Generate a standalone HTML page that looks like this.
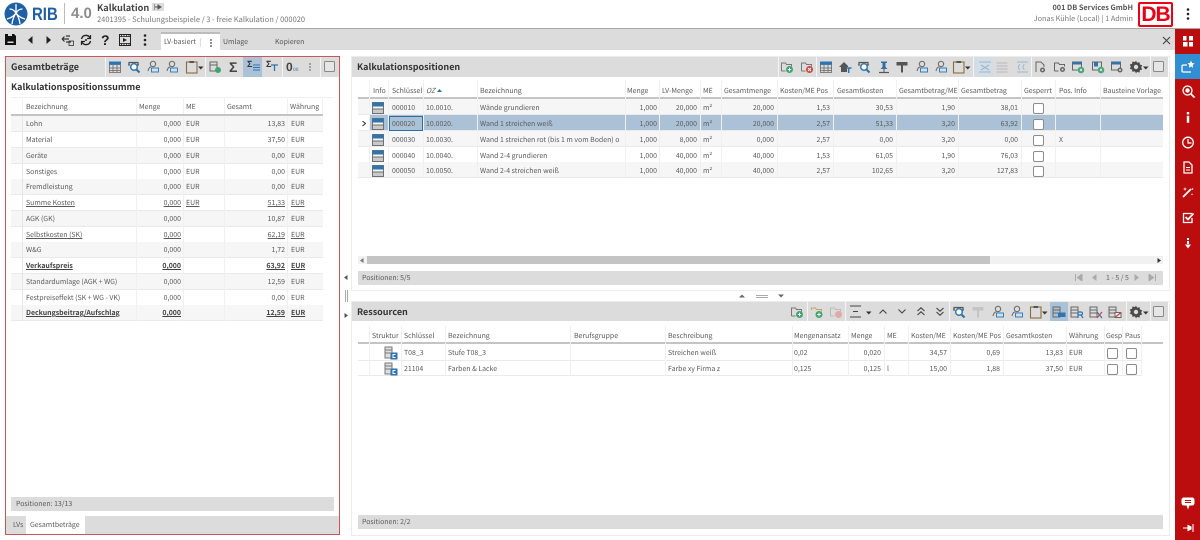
<!DOCTYPE html>
<html lang="de"><head><meta charset="utf-8"><title>Kalkulation</title>
<style>
html,body{margin:0;padding:0;background:#fff}
#p{position:relative;width:1200px;height:540px;overflow:hidden;background:#fff;font-family:"Noto Sans CJK JP","Liberation Sans",sans-serif;font-size:6.95px;line-height:15px;color:#5a5a5a;text-rendering:geometricPrecision;filter:blur(.3px)}
#p div,#p span,#p svg{position:absolute;white-space:nowrap}
.g{background:#dcdcdc}
.t{font-weight:700;font-size:9px;line-height:12px;color:#333}
.sep{width:1px;background:#f4f4f4}
.r{height:15px;border-bottom:1px solid #eaeaea}
.alt{background:#f6f6f6}
.sel{background:#abc2d6}
.b{font-weight:700;color:#444}
.u{text-decoration:underline}
.rt{text-align:right}
.v{width:1px;background:#f0f0f0;top:0;bottom:0}
.hl{height:2px;background:#c4c4c4}
.ck{width:9px;height:9px;border:1px solid #8c8c8c;border-radius:2px;background:#fff}
.i{width:14px;height:14px;overflow:visible}
</style></head><body><div id="p">
<svg style="width:0;height:0">
<defs>
<symbol id="g" viewBox="0 0 14 14"><rect x="1" y="1.5" width="12" height="3.4" fill="#2f74ae"/><path d="M1.5 5v7.5h11V5M1.5 8h11M1.5 10.5h11M5 5v7.5M9 5v7.5" fill="none" stroke="#666" stroke-width=".8"/></symbol>
<symbol id="s" viewBox="0 0 14 14"><path d="M2 5V2.500h9V5" fill="none" stroke="#555" stroke-width="1.2"/><circle cx="7" cy="7" r="3.300" fill="#fff" stroke="#3d7fb3" stroke-width="1.6"/><path d="M9.500 9.500l3 3" stroke="#2f6fa8" stroke-width="2"/><path d="M1 5h2M10 5h2" stroke="#555"/></symbol>
<symbol id="u" viewBox="0 0 14 14"><circle cx="7" cy="4" r="2.700" fill="none" stroke="#666"/><path d="M2 11c.4-2.600 1.800-4 3-4" fill="none" stroke="#666"/><rect x="5.500" y="8" width="7" height="4" fill="#cfe0ef" stroke="#3d7fb3"/></symbol>
<symbol id="c" viewBox="0 0 14 14"><rect x="1.500" y="2" width="10.500" height="11" fill="none" stroke="#8a6d3b" stroke-width="1.100"/><rect x="4.500" y="1" width="4.500" height="2" fill="#555"/></symbol>
<symbol id="d" viewBox="0 0 6 4"><path d="M0 .5h5.500L2.750 3.500z" fill="#333"/></symbol>
<symbol id="fg" viewBox="0 0 14 14"><path d="M1.500 11V3h4l1 1.500h5v2" fill="none" stroke="#777"/><path d="M1.500 11h4" stroke="#777"/><circle cx="9.500" cy="9.500" r="3.500" fill="#3fa56c"/><path d="M7.800 9.500h3.400M9.500 7.800v3.400" stroke="#fff"/></symbol>
<symbol id="fr" viewBox="0 0 14 14"><path d="M1.500 11V3h4l1 1.500h5v2" fill="none" stroke="#777"/><path d="M1.500 11h4" stroke="#777"/><circle cx="9.500" cy="9.500" r="3.500" fill="#d0443e"/><path d="M8 8l3 3M11 8l-3 3" stroke="#fff"/></symbol>
<symbol id="fy" viewBox="0 0 14 14"><path d="M1.500 5V3h4l1 1.500h5v2" fill="none" stroke="#c9a35a"/><circle cx="9" cy="9.500" r="3.500" fill="#3fa56c"/><path d="M7.300 9.500h3.400M9 7.800v3.400" stroke="#fff"/></symbol>
<symbol id="fp" viewBox="0 0 14 14"><path d="M1.500 11V3h4l1 1.500h5v2M1.500 11h4" fill="none" stroke="#bbb"/><circle cx="9.500" cy="9.500" r="3.500" fill="#e3a9a5"/></symbol>
<symbol id="h" viewBox="0 0 14 14"><path d="M1 7l5-5 4 4v1H9v5H3V7z" fill="#555"/><path d="M8 8h5.500M10.700 8v5" stroke="#2f74ae" stroke-width="1.500"/></symbol>
<symbol id="pn" viewBox="0 0 14 14"><path d="M4 1.500h6v1.500H8.500v4l2 2h-7l2-2V3H4z" fill="#2f6fa8"/><path d="M2 12.500h10" stroke="#555" stroke-width="1.200"/><path d="M7 9v3" stroke="#555"/></symbol>
<symbol id="ro" viewBox="0 0 14 14"><path d="M1.500 2h11v3.500h-11z" fill="#555"/><path d="M7 5.500v7" stroke="#555" stroke-width="2"/></symbol>
<symbol id="rp" viewBox="0 0 14 14"><path d="M1.500 2h11v3.500h-11z" fill="#c4c4c4"/><path d="M7 5.500v7" stroke="#c4c4c4" stroke-width="2"/></symbol>
<symbol id="m1" viewBox="0 0 14 14"><path d="M1 2h12M1 12h12M3 5l4 2.500L3 10M11 5L7 7.500 11 10" fill="none" stroke="#9db7cd" stroke-width="1.100"/></symbol>
<symbol id="m2" viewBox="0 0 14 14"><path d="M1.500 3h11M1.500 6h11M1.500 9h11M1.500 12h11" stroke="#b7b7b7" stroke-width="1.100"/></symbol>
<symbol id="m3" viewBox="0 0 14 14"><path d="M2 2h11M2 12h11M5 4.500C3 5 3 9 5 9.500M9.500 4.500C7.500 5 7.500 9 9.500 9.500" fill="none" stroke="#9db7cd" stroke-width="1"/></symbol>
<symbol id="dg" viewBox="0 0 14 14"><path d="M3 12V2h5l3 3v2" fill="none" stroke="#666"/><circle cx="9.500" cy="10" r="2.500" fill="#666"/><circle cx="9.500" cy="10" r="1" fill="#dcdcdc"/></symbol>
<symbol id="fgg" viewBox="0 0 14 14"><path d="M1.500 11V3h4l1 1.500h5v2M1.500 11h4" fill="none" stroke="#666"/><circle cx="9.500" cy="9.500" r="2.500" fill="#666"/><circle cx="9.500" cy="9.500" r="1" fill="#dcdcdc"/></symbol>
<symbol id="bg" viewBox="0 0 14 14"><rect x="1.500" y="2" width="9" height="8" fill="none" stroke="#666"/><rect x="1.500" y="2" width="9" height="2.500" fill="#2f74ae"/><circle cx="10" cy="10" r="3.300" fill="#4aa77a"/><circle cx="10" cy="10" r="1.200" fill="#dcdcdc"/></symbol>
<symbol id="bb" viewBox="0 0 14 14"><rect x="1.500" y="2" width="9" height="8" fill="none" stroke="#666"/><rect x="3" y="2" width="4" height="4.500" fill="#2f74ae"/><circle cx="10" cy="10" r="3.300" fill="#4aa77a"/><circle cx="10" cy="10" r="1.200" fill="#dcdcdc"/></symbol>
<symbol id="bc" viewBox="0 0 14 14"><rect x="1.500" y="2" width="9" height="8" fill="none" stroke="#666"/><rect x="1.500" y="2" width="9" height="2.500" fill="#2f74ae"/><circle cx="10" cy="10" r="2.500" fill="#666"/><circle cx="10" cy="10" r="1" fill="#dcdcdc"/></symbol>
<symbol id="gr" viewBox="0 0 14 14"><path d="M7 .8l1.200 2 2.300-.7.400 2.400 2.300.7-1 2.200 1 2.100-2.300.8-.4 2.300-2.300-.7L7 13.200l-1.200-2-2.300.7-.4-2.300-2.300-.8 1-2.100-1-2.200 2.300-.7.400-2.400 2.300.7z" fill="#4a4a4a"/><circle cx="7" cy="7" r="2.200" fill="#dcdcdc"/></symbol>
<symbol id="sq" viewBox="0 0 14 14"><rect x="1.500" y="1.500" width="10" height="10" rx="1" fill="#e6e6e6" stroke="#8a8a8a"/></symbol>
<symbol id="ex" viewBox="0 0 14 14"><rect x="2" y="2" width="7" height="9" fill="none" stroke="#666"/><path d="M2 5h7" stroke="#666"/><circle cx="10" cy="10" r="3" fill="#3fa56c"/></symbol>
<symbol id="lv" viewBox="0 0 14 14"><rect x="1.500" y="1.500" width="11" height="11" fill="#f4f4f4" stroke="#707070"/><rect x="1.500" y="1.500" width="11" height="4" fill="#2f74ae"/><path d="M2 8h10" stroke="#707070"/><rect x="2" y="8.500" width="10" height="3.500" fill="#c9c9c9"/></symbol>
<symbol id="st" viewBox="0 0 14 14"><rect x="1" y="1" width="7" height="11" fill="#dfdfdf" stroke="#777"/><path d="M1 4h7M1 7h7" stroke="#777"/><rect x="6.500" y="6.500" width="7" height="7" fill="#2f74ae"/><path d="M11.500 8.500H9v3h2.500" fill="none" stroke="#fff"/></symbol>
<symbol id="lst" viewBox="0 0 14 14"><rect x="1" y="2" width="7" height="10" fill="none" stroke="#666"/><path d="M1 5h7M1 8h7" stroke="#666"/><rect x="6" y="7.500" width="7.500" height="4.500" fill="#2f74ae"/></symbol>
<symbol id="lsr" viewBox="0 0 14 14"><rect x="1" y="2" width="7" height="10" fill="none" stroke="#666"/><path d="M1 5h7M1 8h7" stroke="#666"/><path d="M8 13V7h3a1.500 1.500 0 0 1 0 3H8M11 10l2 3" fill="none" stroke="#2f74ae" stroke-width="1.200"/></symbol>
<symbol id="lsx" viewBox="0 0 14 14"><rect x="1" y="2" width="7" height="10" fill="none" stroke="#666"/><path d="M1 5h7M1 8h7" stroke="#666"/><path d="M8 7l5 6" stroke="#2f74ae" stroke-width="1.200"/><path d="M13 7l-5 6" stroke="#d0443e" stroke-width="1.200"/></symbol>
<symbol id="lsz" viewBox="0 0 14 14"><rect x="1" y="2" width="7" height="10" fill="none" stroke="#666"/><path d="M1 5h7M1 8h7" stroke="#666"/><rect x="7" y="7.500" width="6" height="5" fill="#eee" stroke="#666"/><path d="M7 12.500l6-5" stroke="#d0443e" stroke-width="1.200"/></symbol>
</defs></svg>

<!-- header -->
<svg style="left:4px;top:2px;width:24px;height:24px" viewBox="0 0 24 24"><circle cx="12" cy="12" r="11.500" fill="#1f5fa6"/><path d="M12 2v9M3 17c4-1 7-3 9-6 2 3 5 5 9 6M5.500 7c3 0 5 1.500 6.500 4 1.500-2.500 3.500-4 6.500-4M8 22c.5-4 2-8 4-11 2 3 3.500 7 4 11" fill="none" stroke="#fff" stroke-width="1.300"/></svg>
<div style="left:32px;top:1px;font-size:18px;line-height:26px;font-weight:700;color:#1f5fa6;font-family:'Liberation Sans',sans-serif;transform:scaleX(.83);transform-origin:0 0">RIB</div>
<div style="left:64px;top:3px;width:1px;height:21px;background:#bbb"></div>
<div style="left:71px;top:3px;font-size:15px;line-height:22px;font-weight:700;color:#8c8c8c;font-family:'Liberation Sans',sans-serif">4.0</div>
<div style="left:97px;top:0;font-size:9.2px;font-weight:700;color:#444">Kalkulation</div>
<div style="left:152px;top:3px;width:12px;height:8px;background:#dcdcdc"></div>
<svg style="left:154px;top:4px;width:8px;height:6px" viewBox="0 0 8 6"><path d="M0 0v6M1 3h3M4 1v4l3-2z" stroke="#555" fill="#555"/></svg>
<div style="left:97px;top:12px;font-size:7.5px;color:#777">2401395 - Schulungsbeispiele / 3 - freie Kalkulation / 000020</div>
<div class="rt" style="right:67px;top:1px;font-size:7.3px;font-weight:700;color:#555">001 DB Services GmbH</div>
<div class="rt" style="right:67px;top:12px;font-size:7.3px;color:#777">Jonas Kühle (Local) | 1 Admin</div>
<div style="left:1138px;top:2px;width:31px;height:21px;border:2px solid #ec0016;border-radius:2px;background:#fff;color:#ec0016;font:700 21px/21px 'Liberation Sans',sans-serif;text-align:center;letter-spacing:-1px">DB</div>
<svg style="left:1186px;top:8px;width:4px;height:12px" viewBox="0 0 4 12"><circle cx="2" cy="1.500" r="1.300" fill="#222"/><circle cx="2" cy="6" r="1.300" fill="#222"/><circle cx="2" cy="10.500" r="1.300" fill="#222"/></svg>
<div style="left:0;top:28px;width:1200px;height:1px;background:#a8a8a8"></div>

<!-- main toolbar -->
<div class="g" style="left:0;top:29px;width:1175px;height:21px"></div>
<svg style="left:5px;top:34px;width:11px;height:11px" viewBox="0 0 11 11"><path d="M0 0h9l2 2v9H0z" fill="#111"/><rect x="3" y="0" width="4" height="2" fill="#dcdcdc"/><rect x="2.500" y="7.500" width="6" height="1.500" fill="#dcdcdc"/></svg>
<svg style="left:28px;top:36px;width:5px;height:8px" viewBox="0 0 5 8"><path d="M4.500 0v8L0 4z" fill="#222"/></svg>
<svg style="left:46px;top:36px;width:5px;height:8px" viewBox="0 0 5 8"><path d="M.5 0v8L5 4z" fill="#222"/></svg>
<svg style="left:61px;top:34px;width:13px;height:12px" viewBox="0 0 13 12"><path d="M1 5h7M1 5l2.500-2.500M1 5l2.500 2.500M5 2h4M10 8H5" fill="none" stroke="#333" stroke-width="1.200"/><rect x="8" y="7" width="4.500" height="4.500" fill="none" stroke="#333" stroke-width=".8"/></svg>
<svg style="left:80px;top:34px;width:12px;height:12px" viewBox="0 0 12 12"><path d="M1.500 5A4.500 4.500 0 0 1 10 4M10.500 7A4.500 4.500 0 0 1 2 8" fill="none" stroke="#222" stroke-width="1.400"/><path d="M10.500 1v3.500H7M1.500 11V7.500H5" fill="none" stroke="#222" stroke-width="1.200"/><circle cx="6" cy="6" r="1" fill="#222"/></svg>
<div style="left:101px;top:32px;font:700 14px/16px 'Liberation Sans',sans-serif;color:#222">?</div>
<svg style="left:119px;top:34px;width:12px;height:12px" viewBox="0 0 12 12"><rect x=".5" y=".5" width="11" height="11" fill="none" stroke="#222"/><path d="M0 2.500h12M0 9.500h12M2.500 0v3M5 0v3M7.500 0v3M10 0v3M2.500 9v3M5 9v3M7.500 9v3M10 9v3" stroke="#222" stroke-width=".8"/><path d="M4 4l4 2-4 2z" fill="#222"/></svg>
<svg style="left:143px;top:34px;width:4px;height:12px" viewBox="0 0 4 12"><circle cx="2" cy="1.500" r="1.300" fill="#222"/><circle cx="2" cy="6" r="1.300" fill="#222"/><circle cx="2" cy="10.500" r="1.300" fill="#222"/></svg>
<div style="left:161px;top:32px;width:59px;height:18px;background:#fff"></div>
<div style="left:161px;top:32px;width:59px;height:2px;background:#bcbcbc"></div>
<div style="left:164px;top:35px">LV-basiert</div>
<div style="left:200px;top:38px;width:1px;height:9px;background:#ddd"></div>
<svg style="left:210px;top:39px;width:2px;height:8px" viewBox="0 0 2 8"><circle cx="1" cy="1" r=".9" fill="#444"/><circle cx="1" cy="4" r=".9" fill="#444"/><circle cx="1" cy="7" r=".9" fill="#444"/></svg>
<div style="left:223px;top:35px;color:#555">Umlage</div>
<div style="left:275px;top:35px;color:#555">Kopieren</div>
<svg style="left:1162px;top:36px;width:9px;height:9px" viewBox="0 0 9 9"><path d="M1 1l7 7M8 1L1 8" stroke="#444" stroke-width="1.100"/></svg>

<!-- sidebar -->
<div style="left:1175px;top:29px;width:25px;height:511px;background:#bb0d0d"></div>
<div style="left:1175px;top:54px;width:25px;height:25px;background:#2f8fd2"></div>
<svg style="left:1182px;top:36px;width:12px;height:11px" viewBox="0 0 12 11"><path d="M1 0h3.500v4.500H1zM7 0h4v4.500H7zM1 6h4.500v4.500H1zM7 6h4v4.500H7z" fill="#fff"/></svg>
<svg style="left:1181px;top:60px;width:14px;height:13px" viewBox="0 0 14 13"><path d="M6 5H2.500c-1 0-1.500.5-1.500 1.500V11c0 .8.500 1 1.500 1H10" fill="none" stroke="#fff" stroke-width="1.300"/><path d="M10 .5l1 2.500 2.500.3-1.800 1.800.4 2.600L10 6.500 7.900 7.700l.4-2.600L6.500 3.300 9 3z" fill="#fff"/></svg>
<svg style="left:1182px;top:85px;width:13px;height:13px" viewBox="0 0 13 13"><circle cx="5.500" cy="5.500" r="4.500" fill="none" stroke="#fff" stroke-width="1.300"/><circle cx="5.500" cy="5.500" r="2.200" fill="#fff"/><path d="M9 9l3.500 3.500" stroke="#fff" stroke-width="1.800"/></svg>
<svg style="left:1186px;top:112px;width:4px;height:11px" viewBox="0 0 4 11"><rect x=".8" y="0" width="2.400" height="2.400" fill="#fff"/><rect x=".8" y="3.800" width="2.400" height="7" fill="#fff"/></svg>
<svg style="left:1181px;top:136px;width:14px;height:13px" viewBox="0 0 14 13"><circle cx="7" cy="6.500" r="5.300" fill="none" stroke="#fff" stroke-width="1.300"/><path d="M7 3v4h3.500" fill="none" stroke="#fff" stroke-width="1.200"/></svg>
<svg style="left:1183px;top:161px;width:10px;height:13px" viewBox="0 0 10 13"><path d="M1 1h5l3 3v8H1z" fill="none" stroke="#fff" stroke-width="1.300"/><path d="M3 6.500h4M3 9h4" stroke="#fff"/></svg>
<svg style="left:1182px;top:186px;width:12px;height:12px" viewBox="0 0 12 12"><path d="M1 11L9 3" stroke="#fff" stroke-width="1.800"/><path d="M10 2.500L11 3.500" stroke="#fff" stroke-width="1.500"/><path d="M3 1l.5 1.500L5 3l-1.500.5L3 5l-.5-1.500L1 3l1.500-.5zM10 7l.3 1 1 .3-1 .3-.3 1-.3-1-1-.3 1-.3z" fill="#fff"/></svg>
<svg style="left:1182px;top:212px;width:12px;height:12px" viewBox="0 0 12 12"><path d="M10 6v4.500H1.500V1.500H10" fill="none" stroke="#fff" stroke-width="1.300"/><path d="M3.500 5L6 7.500 11.500 1.500" fill="none" stroke="#fff" stroke-width="1.800"/></svg>
<svg style="left:1185px;top:238px;width:6px;height:11px" viewBox="0 0 6 11"><rect x="2" y="0" width="2" height="2" fill="#fff"/><rect x="2" y="3" width="2" height="3" fill="#fff"/><path d="M0 6.500h6L3 10.500z" fill="#fff"/></svg>
<svg style="left:1181px;top:497px;width:14px;height:13px" viewBox="0 0 14 13"><path d="M3 .5h8c1.500 0 2.500 1 2.500 2.500v3c0 1.500-1 2.500-2.500 2.500H8.500L7 12.500 5.500 8.500H3C1.500 8.500.5 7.500.5 6V3C.5 1.500 1.500.5 3 .5z" fill="#fff"/><path d="M4 3.500h6M4 5.500h6" stroke="#bb0d0d"/></svg>
<svg style="left:1183px;top:524px;width:11px;height:8px" viewBox="0 0 11 8"><path d="M0 4h5M5 1.500v5L8 5V3zM10 0v8" stroke="#fff" fill="#fff" stroke-width="1.100"/></svg>

<!-- side splitter -->
<svg style="left:344px;top:275px;width:4px;height:5px" viewBox="0 0 4 5"><path d="M3.500 0v5L0 2.500z" fill="#555"/></svg>
<div style="left:345px;top:290px;width:1px;height:12px;background:#aaa"></div>
<div style="left:347px;top:290px;width:1px;height:12px;background:#aaa"></div>
<svg style="left:344px;top:313px;width:4px;height:5px" viewBox="0 0 4 5"><path d="M.5 0v5L4 2.500z" fill="#555"/></svg>
<svg style="left:739px;top:294px;width:6px;height:4px" viewBox="0 0 6 4"><path d="M0 3.500h6L3 .5z" fill="#666"/></svg>
<div style="left:756px;top:295px;width:12px;height:1px;background:#aaa"></div>
<div style="left:756px;top:297px;width:12px;height:1px;background:#aaa"></div>
<svg style="left:778px;top:294px;width:6px;height:4px" viewBox="0 0 6 4"><path d="M0 .5h6L3 3.500z" fill="#666"/></svg>

<!-- LEFT PANEL -->
<div style="left:5px;top:56px;width:333px;height:477px;border:1px solid #c9575a"></div>
<div class="g" style="left:6px;top:57px;width:333px;height:20px"></div>
<div class="t" style="left:11px;top:61px">Gesamtbeträge</div>
<div class="sep" style="left:105px;top:57px;height:20px"></div><div class="sep" style="left:205px;top:57px;height:20px"></div><div class="sep" style="left:282px;top:57px;height:20px"></div><div class="sep" style="left:320px;top:57px;height:20px"></div>
<div style="left:243px;top:57px;width:19px;height:20px;background:#abc2d6"></div>
<svg class="i" style="left:108px;top:60px"><use href="#g"/></svg>
<svg class="i" style="left:127px;top:60px"><use href="#s"/></svg>
<svg class="i" style="left:146px;top:60px"><use href="#u"/></svg>
<svg class="i" style="left:165px;top:60px"><use href="#u"/></svg>
<svg class="i" style="left:185px;top:60px"><use href="#c"/></svg>
<svg style="left:198px;top:66px;width:6px;height:4px"><use href="#d"/></svg>
<svg class="i" style="left:208px;top:60px"><use href="#ex"/></svg>
<div style="left:229px;top:58px;font:700 14px/18px 'Liberation Sans',sans-serif;color:#444">Σ</div>
<div style="left:247px;top:59px;font:700 9px/10px 'Liberation Sans',sans-serif;color:#333">Σ</div>
<svg style="left:253px;top:64px;width:7px;height:7px" viewBox="0 0 7 7"><path d="M0 1h7M0 3.500h7M0 6h7" stroke="#2f74ae"/></svg>
<div style="left:266px;top:59px;font:700 9px/10px 'Liberation Sans',sans-serif;color:#333">Σ</div>
<svg style="left:271px;top:64px;width:7px;height:7px" viewBox="0 0 7 7"><path d="M0 1h7M3.500 1v6" stroke="#2f74ae" stroke-width="1.300"/></svg>
<div style="left:286px;top:60px;font:700 12px/15px 'Liberation Sans',sans-serif;color:#444">0</div>
<div style="left:293px;top:67px;font:700 5px/7px 'Liberation Sans',sans-serif;color:#6c96b8">00</div>
<svg style="left:309px;top:63px;width:2px;height:8px" viewBox="0 0 2 8"><circle cx="1" cy="1" r=".9" fill="#777"/><circle cx="1" cy="4" r=".9" fill="#777"/><circle cx="1" cy="7" r=".9" fill="#777"/></svg>
<svg class="i" style="left:323px;top:60px"><use href="#sq"/></svg>
<div class="t" style="left:11px;top:81px">Kalkulationspositionssumme</div>

<div style="left:11px;top:97px;width:323px;height:18px;border-top:1px solid #f0f0f0"></div>
<div class="hl" style="left:11px;top:114px;width:312px"></div>
<div class="v" style="left:22px;top:97px;bottom:auto;height:17px"></div><div class="v" style="left:136px;top:97px;bottom:auto;height:17px"></div><div class="v" style="left:183px;top:97px;bottom:auto;height:17px"></div><div class="v" style="left:224px;top:97px;bottom:auto;height:17px"></div><div class="v" style="left:287px;top:97px;bottom:auto;height:17px"></div><div class="v" style="left:322px;top:97px;bottom:auto;height:17px"></div>
<div style="left:26px;top:100px">Bezeichnung</div><div style="left:139px;top:100px">Menge</div><div style="left:186px;top:100px">ME</div><div style="left:227px;top:100px">Gesamt</div><div style="left:290px;top:100px">Währung</div>

<div class="alt r" style="left:11px;top:116px;width:312px"></div>
<div class="r" style="left:11px;top:132px;width:312px"></div>
<div class="alt r" style="left:11px;top:148px;width:312px"></div>
<div class="r" style="left:11px;top:164px;width:312px"></div>
<div class="alt r" style="left:11px;top:179px;width:312px"></div>
<div class="r" style="left:11px;top:195px;width:312px"></div>
<div class="alt r" style="left:11px;top:211px;width:312px"></div>
<div class="r" style="left:11px;top:227px;width:312px"></div>
<div class="alt r" style="left:11px;top:242px;width:312px"></div>
<div class="r" style="left:11px;top:258px;width:312px"></div>
<div class="alt r" style="left:11px;top:274px;width:312px"></div>
<div class="r" style="left:11px;top:290px;width:312px"></div>
<div class="alt r" style="left:11px;top:305px;width:312px"></div>
<div class="v" style="left:22px;top:116px;bottom:auto;height:205px;background:#e6e6e6"></div><div class="v" style="left:136px;top:116px;bottom:auto;height:205px"></div><div class="v" style="left:183px;top:116px;bottom:auto;height:205px"></div><div class="v" style="left:224px;top:116px;bottom:auto;height:205px"></div><div class="v" style="left:287px;top:116px;bottom:auto;height:205px"></div>

<div style="left:26px;top:117px">Lohn</div><div class="rt" style="right:1019px;top:117px">0,000</div><div style="left:186px;top:117px">EUR</div><div class="rt" style="right:915px;top:117px">13,83</div><div style="left:291px;top:117px">EUR</div>
<div style="left:26px;top:133px">Material</div><div class="rt" style="right:1019px;top:133px">0,000</div><div style="left:186px;top:133px">EUR</div><div class="rt" style="right:915px;top:133px">37,50</div><div style="left:291px;top:133px">EUR</div>
<div style="left:26px;top:149px">Geräte</div><div class="rt" style="right:1019px;top:149px">0,000</div><div style="left:186px;top:149px">EUR</div><div class="rt" style="right:915px;top:149px">0,00</div><div style="left:291px;top:149px">EUR</div>
<div style="left:26px;top:165px">Sonstiges</div><div class="rt" style="right:1019px;top:165px">0,000</div><div style="left:186px;top:165px">EUR</div><div class="rt" style="right:915px;top:165px">0,00</div><div style="left:291px;top:165px">EUR</div>
<div style="left:26px;top:180px">Fremdleistung</div><div class="rt" style="right:1019px;top:180px">0,000</div><div style="left:186px;top:180px">EUR</div><div class="rt" style="right:915px;top:180px">0,00</div><div style="left:291px;top:180px">EUR</div>
<div class="u" style="left:26px;top:196px">Summe Kosten</div><div class="rt u" style="right:1019px;top:196px">0,000</div><div class="u" style="left:186px;top:196px">EUR</div><div class="rt u" style="right:915px;top:196px">51,33</div><div class="u" style="left:291px;top:196px">EUR</div>
<div style="left:26px;top:212px">AGK (GK)</div><div class="rt" style="right:1019px;top:212px">0,000</div><div class="rt" style="right:915px;top:212px">10,87</div><div style="left:291px;top:212px">EUR</div>
<div class="u" style="left:26px;top:228px">Selbstkosten (SK)</div><div class="rt u" style="right:1019px;top:228px">0,000</div><div class="rt u" style="right:915px;top:228px">62,19</div><div class="u" style="left:291px;top:228px">EUR</div>
<div style="left:26px;top:243px">W&amp;G</div><div class="rt" style="right:1019px;top:243px">0,000</div><div class="rt" style="right:915px;top:243px">1,72</div><div style="left:291px;top:243px">EUR</div>
<div class="b u" style="left:26px;top:259px">Verkaufspreis</div><div class="b u rt" style="right:1019px;top:259px">0,000</div><div class="b u rt" style="right:915px;top:259px">63,92</div><div class="b u" style="left:291px;top:259px">EUR</div>
<div style="left:26px;top:275px">Standardumlage (AGK + WG)</div><div class="rt" style="right:1019px;top:275px">0,000</div><div class="rt" style="right:915px;top:275px">12,59</div><div style="left:291px;top:275px">EUR</div>
<div style="left:26px;top:291px">Festpreiseffekt (SK + WG - VK)</div><div class="rt" style="right:1019px;top:291px">0,000</div><div class="rt" style="right:915px;top:291px">0,00</div><div style="left:291px;top:291px">EUR</div>
<div class="b u" style="left:26px;top:306px">Deckungsbeitrag/Aufschlag</div><div class="b u rt" style="right:1019px;top:306px">0,000</div><div class="b u rt" style="right:915px;top:306px">12,59</div><div class="b u" style="left:291px;top:306px">EUR</div>

<div class="g" style="left:11px;top:497px;width:323px;height:14px"></div>
<div style="left:16px;top:497px">Positionen: 13/13</div>
<div class="g" style="left:6px;top:516px;width:333px;height:18px"></div>
<div style="left:26px;top:516px;width:59px;height:18px;background:#fff"></div>
<div style="left:13px;top:518px">LVs</div><div style="left:30px;top:518px">Gesamtbeträge</div>

<!-- RIGHT TOP PANEL -->
<div style="left:351px;top:56px;width:817px;height:233px;border:1px solid #ececec"></div>
<div class="g" style="left:352px;top:57px;width:816px;height:20px"></div>
<div class="t" style="left:357px;top:61px">Kalkulationspositionen</div>
<div class="sep" style="left:778px;top:57px;height:20px"></div><div class="sep" style="left:816px;top:57px;height:20px"></div><div class="sep" style="left:973px;top:57px;height:20px"></div><div class="sep" style="left:1031px;top:57px;height:20px"></div><div class="sep" style="left:1150px;top:57px;height:20px"></div>
<div style="left:974px;top:57px;width:19px;height:20px;background:#d3dde6"></div>
<svg class="i" style="left:780px;top:60px"><use href="#fg"/></svg>
<svg class="i" style="left:800px;top:60px"><use href="#fr"/></svg>
<svg class="i" style="left:819px;top:60px"><use href="#g"/></svg>
<svg class="i" style="left:838px;top:60px"><use href="#h"/></svg>
<svg class="i" style="left:857px;top:60px"><use href="#s"/></svg>
<svg class="i" style="left:877px;top:60px"><use href="#pn"/></svg>
<svg class="i" style="left:895px;top:60px"><use href="#ro"/></svg>
<svg class="i" style="left:915px;top:60px"><use href="#u"/></svg>
<svg class="i" style="left:934px;top:60px"><use href="#u"/></svg>
<svg class="i" style="left:952px;top:60px"><use href="#c"/></svg>
<svg style="left:965px;top:66px;width:6px;height:4px"><use href="#d"/></svg>
<svg class="i" style="left:978px;top:60px"><use href="#m1"/></svg>
<svg class="i" style="left:995px;top:60px"><use href="#m2"/></svg>
<svg class="i" style="left:1015px;top:60px"><use href="#m3"/></svg>
<svg class="i" style="left:1033px;top:60px"><use href="#dg"/></svg>
<svg class="i" style="left:1053px;top:60px"><use href="#fgg"/></svg>
<svg class="i" style="left:1071px;top:60px"><use href="#bg"/></svg>
<svg class="i" style="left:1091px;top:60px"><use href="#bb"/></svg>
<svg class="i" style="left:1110px;top:60px"><use href="#bc"/></svg>
<svg class="i" style="left:1129px;top:60px"><use href="#gr"/></svg>
<svg style="left:1143px;top:66px;width:6px;height:4px"><use href="#d"/></svg>
<svg class="i" style="left:1152px;top:60px"><use href="#sq"/></svg>

<div class="hl" style="left:358px;top:97px;width:805px"></div>
<div style="left:373px;top:84px">Info</div><div style="left:392px;top:84px">Schlüssel</div><div style="left:426px;top:84px;font-style:italic">OZ</div>
<svg style="left:437px;top:89px;width:5px;height:3px" viewBox="0 0 5 3"><path d="M0 3h5L2.500 0z" fill="#2f6fa8"/></svg>
<div style="left:480px;top:84px">Bezeichnung</div><div style="left:627px;top:84px">Menge</div><div style="left:662px;top:84px">LV-Menge</div><div style="left:703px;top:84px">ME</div><div style="left:724px;top:84px">Gesamtmenge</div><div style="left:780px;top:84px">Kosten/ME Pos</div><div style="left:837px;top:84px">Gesamtkosten</div><div style="left:899px;top:84px">Gesamtbetrag/ME</div><div style="left:961px;top:84px">Gesamtbetrag</div><div style="left:1024px;top:84px">Gesperrt</div><div style="left:1059px;top:84px">Pos. Info</div><div style="left:1103px;top:84px">Bausteine Vorlage</div>

<div class="alt r" style="left:358px;top:99px;width:805px"></div>
<div class="r" style="left:358px;top:115px;width:11px"></div>
<div class="sel r" style="left:369px;top:115px;width:794px"></div>
<div class="alt r" style="left:358px;top:131px;width:805px"></div>
<div class="r" style="left:358px;top:147px;width:805px"></div>
<div class="alt r" style="left:358px;top:162px;width:805px"></div>
<div class="v" style="left:369px;top:80px;bottom:auto;height:97px"></div><div class="v" style="left:388px;top:80px;bottom:auto;height:97px"></div><div class="v" style="left:423px;top:80px;bottom:auto;height:97px"></div><div class="v" style="left:477px;top:80px;bottom:auto;height:97px"></div><div class="v" style="left:625px;top:80px;bottom:auto;height:97px"></div><div class="v" style="left:659px;top:80px;bottom:auto;height:97px"></div><div class="v" style="left:700px;top:80px;bottom:auto;height:97px"></div><div class="v" style="left:721px;top:80px;bottom:auto;height:97px"></div><div class="v" style="left:777px;top:80px;bottom:auto;height:97px"></div><div class="v" style="left:833px;top:80px;bottom:auto;height:97px"></div><div class="v" style="left:896px;top:80px;bottom:auto;height:97px"></div><div class="v" style="left:958px;top:80px;bottom:auto;height:97px"></div><div class="v" style="left:1021px;top:80px;bottom:auto;height:97px"></div><div class="v" style="left:1055px;top:80px;bottom:auto;height:97px"></div><div class="v" style="left:1100px;top:80px;bottom:auto;height:97px"></div>
<svg style="left:362px;top:121px;width:4px;height:5px" viewBox="0 0 4 5"><path d="M.5 0L3.500 2.500.5 5" fill="none" stroke="#333"/></svg>
<div style="left:389px;top:116px;width:32px;height:13px;border:1px solid #2f6fa8"></div>
<svg class="i" style="left:371px;top:101px"><use href="#lv"/></svg><svg class="i" style="left:371px;top:117px"><use href="#lv"/></svg><svg class="i" style="left:371px;top:133px"><use href="#lv"/></svg><svg class="i" style="left:371px;top:149px"><use href="#lv"/></svg><svg class="i" style="left:371px;top:164px"><use href="#lv"/></svg>

<div style="left:392px;top:101px">000010</div><div style="left:426px;top:101px">10.0010.</div><div style="left:480px;top:101px">Wände grundieren</div><div class="rt" style="right:543px;top:101px">1,000</div><div class="rt" style="right:503px;top:101px">20,000</div><div style="left:703px;top:101px">m²</div><div class="rt" style="right:426px;top:101px">20,000</div><div class="rt" style="right:370px;top:101px">1,53</div><div class="rt" style="right:307px;top:101px">30,53</div><div class="rt" style="right:245px;top:101px">1,90</div><div class="rt" style="right:182px;top:101px">38,01</div><div class="ck" style="left:1033px;top:103px"></div>
<div style="left:392px;top:117px">000020</div><div style="left:426px;top:117px">10.0020.</div><div style="left:480px;top:117px">Wand 1 streichen weiß</div><div class="rt" style="right:543px;top:117px">1,000</div><div class="rt" style="right:503px;top:117px">20,000</div><div style="left:703px;top:117px">m²</div><div class="rt" style="right:426px;top:117px">20,000</div><div class="rt" style="right:370px;top:117px">2,57</div><div class="rt" style="right:307px;top:117px">51,33</div><div class="rt" style="right:245px;top:117px">3,20</div><div class="rt" style="right:182px;top:117px">63,92</div><div class="ck" style="left:1033px;top:119px"></div>
<div style="left:392px;top:133px">000030</div><div style="left:426px;top:133px">10.0030.</div><div style="left:480px;top:133px">Wand 1 streichen rot (bis 1 m vom Boden) o</div><div class="rt" style="right:543px;top:133px">1,000</div><div class="rt" style="right:503px;top:133px">8,000</div><div style="left:703px;top:133px">m²</div><div class="rt" style="right:426px;top:133px">0,000</div><div class="rt" style="right:370px;top:133px">2,57</div><div class="rt" style="right:307px;top:133px">0,00</div><div class="rt" style="right:245px;top:133px">3,20</div><div class="rt" style="right:182px;top:133px">0,00</div><div class="ck" style="left:1033px;top:135px"></div><div style="left:1059px;top:133px">X</div>
<div style="left:392px;top:149px">000040</div><div style="left:426px;top:149px">10.0040.</div><div style="left:480px;top:149px">Wand 2-4 grundieren</div><div class="rt" style="right:543px;top:149px">1,000</div><div class="rt" style="right:503px;top:149px">40,000</div><div style="left:703px;top:149px">m²</div><div class="rt" style="right:426px;top:149px">40,000</div><div class="rt" style="right:370px;top:149px">1,53</div><div class="rt" style="right:307px;top:149px">61,05</div><div class="rt" style="right:245px;top:149px">1,90</div><div class="rt" style="right:182px;top:149px">76,03</div><div class="ck" style="left:1033px;top:151px"></div>
<div style="left:392px;top:164px">000050</div><div style="left:426px;top:164px">10.0050.</div><div style="left:480px;top:164px">Wand 2-4 streichen weiß</div><div class="rt" style="right:543px;top:164px">1,000</div><div class="rt" style="right:503px;top:164px">40,000</div><div style="left:703px;top:164px">m²</div><div class="rt" style="right:426px;top:164px">40,000</div><div class="rt" style="right:370px;top:164px">2,57</div><div class="rt" style="right:307px;top:164px">102,65</div><div class="rt" style="right:245px;top:164px">3,20</div><div class="rt" style="right:182px;top:164px">127,83</div><div class="ck" style="left:1033px;top:166px"></div>

<div style="left:358px;top:256px;width:805px;height:8px;background:#f1f1f1"></div>
<div style="left:367px;top:256px;width:623px;height:8px;background:#c4c4c4"></div>
<svg style="left:360px;top:258px;width:4px;height:5px" viewBox="0 0 4 5"><path d="M3.500 0v5L0 2.500z" fill="#777"/></svg>
<svg style="left:1157px;top:258px;width:4px;height:5px" viewBox="0 0 4 5"><path d="M.5 0v5L4 2.500z" fill="#333"/></svg>
<div class="g" style="left:358px;top:271px;width:805px;height:14px"></div>
<div style="left:362px;top:271px">Positionen: 5/5</div>
<svg style="left:1075px;top:274px;width:8px;height:7px" viewBox="0 0 8 7"><path d="M.5 0v7M7 0v7L2.500 3.500z" stroke="#aaa" fill="#aaa"/></svg>
<svg style="left:1092px;top:274px;width:5px;height:7px" viewBox="0 0 5 7"><path d="M4.500 0v7L0 3.500z" fill="#aaa"/></svg>
<div style="left:1106px;top:271px;color:#666">1 - 5 / 5</div>
<svg style="left:1134px;top:274px;width:5px;height:7px" viewBox="0 0 5 7"><path d="M.5 0v7L5 3.500z" fill="#aaa"/></svg>
<svg style="left:1148px;top:274px;width:8px;height:7px" viewBox="0 0 8 7"><path d="M7.500 0v7M1 0v7l4.500-3.500z" stroke="#aaa" fill="#aaa"/></svg>

<!-- RESOURCES PANEL -->
<div style="left:351px;top:301px;width:817px;height:233px;border:1px solid #ececec"></div>
<div class="g" style="left:352px;top:302px;width:816px;height:19px"></div>
<div class="t" style="left:357px;top:306px">Ressourcen</div>
<div class="sep" style="left:807px;top:302px;height:19px"></div><div class="sep" style="left:845px;top:302px;height:19px"></div><div class="sep" style="left:949px;top:302px;height:19px"></div><div class="sep" style="left:1126px;top:302px;height:19px"></div><div class="sep" style="left:1150px;top:302px;height:19px"></div>
<div style="left:1050px;top:302px;width:18px;height:19px;background:#abc2d6"></div>
<svg class="i" style="left:790px;top:305px"><use href="#fg"/></svg>
<svg class="i" style="left:810px;top:305px"><use href="#fy"/></svg>
<svg class="i" style="left:829px;top:305px"><use href="#fp"/></svg>
<svg style="left:850px;top:305px;width:11px;height:13px" viewBox="0 0 11 13"><path d="M0 1h11M3 6.500h5M0 12h11" stroke="#444"/></svg>
<svg style="left:866px;top:311px;width:6px;height:4px"><use href="#d"/></svg>
<svg style="left:879px;top:309px;width:8px;height:5px" viewBox="0 0 8 5"><path d="M.5 4.500L4 1l3.500 3.500" fill="none" stroke="#444" stroke-width="1.100"/></svg>
<svg style="left:898px;top:309px;width:8px;height:5px" viewBox="0 0 8 5"><path d="M.5.500L4 4 7.500.5" fill="none" stroke="#444" stroke-width="1.100"/></svg>
<svg style="left:917px;top:307px;width:8px;height:9px" viewBox="0 0 8 9"><path d="M.5 4L4 .8 7.500 4M.5 8L4 4.800 7.500 8" fill="none" stroke="#444" stroke-width="1.100"/></svg>
<svg style="left:936px;top:307px;width:8px;height:9px" viewBox="0 0 8 9"><path d="M.5 1L4 4.200 7.500 1M.5 5L4 8.200 7.500 5" fill="none" stroke="#444" stroke-width="1.100"/></svg>
<svg class="i" style="left:952px;top:305px"><use href="#s"/></svg>
<svg class="i" style="left:971px;top:305px"><use href="#rp"/></svg>
<svg class="i" style="left:991px;top:305px"><use href="#u"/></svg>
<svg class="i" style="left:1010px;top:305px"><use href="#u"/></svg>
<svg class="i" style="left:1029px;top:305px"><use href="#c"/></svg>
<svg style="left:1042px;top:311px;width:6px;height:4px"><use href="#d"/></svg>
<svg class="i" style="left:1052px;top:305px"><use href="#lst"/></svg>
<svg class="i" style="left:1070px;top:305px"><use href="#lsr"/></svg>
<svg class="i" style="left:1089px;top:305px"><use href="#lsx"/></svg>
<svg class="i" style="left:1108px;top:305px"><use href="#lsz"/></svg>
<svg class="i" style="left:1129px;top:305px"><use href="#gr"/></svg>
<svg style="left:1143px;top:311px;width:6px;height:4px"><use href="#d"/></svg>
<svg class="i" style="left:1152px;top:305px"><use href="#sq"/></svg>

<div class="hl" style="left:358px;top:342px;width:805px"></div>
<div style="left:372px;top:329px">Struktur</div><div style="left:404px;top:329px">Schlüssel</div><div style="left:448px;top:329px">Bezeichnung</div><div style="left:574px;top:329px">Berufsgruppe</div><div style="left:668px;top:329px">Beschreibung</div><div style="left:794px;top:329px">Mengenansatz</div><div style="left:851px;top:329px">Menge</div><div style="left:887px;top:329px">ME</div><div style="left:911px;top:329px">Kosten/ME</div><div style="left:953px;top:329px">Kosten/ME Pos</div><div style="left:1006px;top:329px">Gesamtkosten</div><div style="left:1069px;top:329px">Währung</div><div style="left:1106px;top:329px">Gesp</div><div style="left:1125px;top:329px">Paus</div>
<div class="r" style="left:358px;top:345px;width:783px"></div>
<div class="r" style="left:358px;top:360px;width:783px"></div>
<div class="v" style="left:369px;top:326px;bottom:auto;height:50px"></div><div class="v" style="left:401px;top:326px;bottom:auto;height:50px"></div><div class="v" style="left:445px;top:326px;bottom:auto;height:50px"></div><div class="v" style="left:570px;top:326px;bottom:auto;height:50px"></div><div class="v" style="left:665px;top:326px;bottom:auto;height:50px"></div><div class="v" style="left:792px;top:326px;bottom:auto;height:50px"></div><div class="v" style="left:848px;top:326px;bottom:auto;height:50px"></div><div class="v" style="left:884px;top:326px;bottom:auto;height:50px"></div><div class="v" style="left:908px;top:326px;bottom:auto;height:50px"></div><div class="v" style="left:950px;top:326px;bottom:auto;height:50px"></div><div class="v" style="left:1003px;top:326px;bottom:auto;height:50px"></div><div class="v" style="left:1066px;top:326px;bottom:auto;height:50px"></div><div class="v" style="left:1104px;top:326px;bottom:auto;height:50px"></div><div class="v" style="left:1122px;top:326px;bottom:auto;height:50px"></div><div class="v" style="left:1141px;top:326px;bottom:auto;height:50px"></div>
<svg class="i" style="left:384px;top:346px"><use href="#st"/></svg><svg class="i" style="left:384px;top:362px"><use href="#st"/></svg>
<div style="left:404px;top:346px">T08_3</div><div style="left:448px;top:346px">Stufe T08_3</div><div style="left:668px;top:346px">Streichen weiß</div><div style="left:794px;top:346px">0,02</div><div class="rt" style="right:319px;top:346px">0,020</div><div class="rt" style="right:253px;top:346px">34,57</div><div class="rt" style="right:200px;top:346px">0,69</div><div class="rt" style="right:137px;top:346px">13,83</div><div style="left:1069px;top:346px">EUR</div><div class="ck" style="left:1107px;top:348px"></div><div class="ck" style="left:1126px;top:348px"></div>
<div style="left:404px;top:362px">21104</div><div style="left:448px;top:362px">Farben &amp; Lacke</div><div style="left:668px;top:362px">Farbe xy Firma z</div><div style="left:794px;top:362px">0,125</div><div class="rt" style="right:319px;top:362px">0,125</div><div style="left:887px;top:362px">l</div><div class="rt" style="right:253px;top:362px">15,00</div><div class="rt" style="right:200px;top:362px">1,88</div><div class="rt" style="right:137px;top:362px">37,50</div><div style="left:1069px;top:362px">EUR</div><div class="ck" style="left:1107px;top:364px"></div><div class="ck" style="left:1126px;top:364px"></div>
<div class="g" style="left:358px;top:515px;width:805px;height:14px"></div>
<div style="left:362px;top:515px">Positionen: 2/2</div>
</div></body></html>
